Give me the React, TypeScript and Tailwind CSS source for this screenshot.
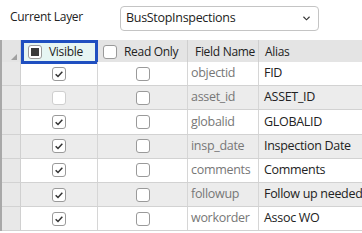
import React from "react";

const ROWS = [
    { field: "objectid", alias: "FID", visible: true },
    { field: "asset_id", alias: "ASSET_ID", visible: false, disabled: true },
    { field: "globalid", alias: "GLOBALID", visible: true },
    { field: "insp_date", alias: "Inspection Date", visible: true },
    { field: "comments", alias: "Comments", visible: true },
    { field: "followup", alias: "Follow up needed", visible: true },
    { field: "workorder", alias: "Assoc WO", visible: true },
];

function Box({ checked, disabled, mixed }: { checked?: boolean; disabled?: boolean; mixed?: boolean }) {
    return (
        <span className={`w-[14px] h-[14px] rounded-[3px] border bg-white flex items-center justify-center shrink-0 ${disabled ? "border-[#cfcfcf]" : "border-[#9a9a9a]"}`}>
            {checked && (
                <svg viewBox="0 0 12 12" className="w-[10px] h-[10px]">
                    <path d="M2 6.2 L4.8 9 L10 3.2" fill="none" stroke="#333" strokeWidth="1.8" />
                </svg>
            )}
            {mixed && <span className="w-[8px] h-[8px] bg-[#3a3a3a]" />}
        </span>
    );
}

export default function App() {
    return (
        <div className="w-[362px] h-[233px] bg-white overflow-hidden text-[#222] tracking-[-0.3px] whitespace-nowrap" style={{ fontFamily: '"Open Sans", "Noto Sans", sans-serif' }}>
            {/* Layer picker */}
            <div className="flex items-center h-[40px] pb-[6px]">
                <span className="ml-[10px] w-[110px] text-[12px]">Current Layer</span>
                <div className="w-[199px] h-[25px] mt-[2px] border border-[#c4c4c4] rounded-[4px] flex items-center pl-[5px] pr-[8px]">
                    <span className="flex-1 text-[12.5px]">BusStopInspections</span>
                    <svg viewBox="0 0 8 5" className="w-[7px] h-[5px]">
                        <path d="M0.5 0.5 L4 4 L7.5 0.5" fill="none" stroke="#333" strokeWidth="1.3" />
                    </svg>
                </div>
            </div>

            {/* Grid */}
            <div className="border-l-2 border-[#a8a8a8] text-[12px]">
                <div className="grid grid-cols-[19px_77px_90px_71px_1fr] h-[22px] bg-[#e4e4e4]">
                    <div className="border-r border-[#d0d0d0] relative">
                        <svg viewBox="0 0 6 6" className="absolute right-[3px] bottom-[4px] w-[6px] h-[6px]">
                            <path d="M6 0 L6 6 L0 6 Z" fill="#a0a0a0" />
                        </svg>
                    </div>
                    <div className="border-[3px] border-[#1f4fc0] bg-[#e6f5f3] flex items-center pl-[4px] gap-[7px]">
                        <Box mixed />
                        <span>Visible</span>
                    </div>
                    <div className="border-r border-[#cfcfcf] flex items-center pl-[5px] gap-[7px]">
                        <Box />
                        <span>Read Only</span>
                    </div>
                    <div className="border-r border-[#cfcfcf] flex items-center pl-[7px] overflow-hidden">Field Name</div>
                    <div className="flex items-center pl-[6px]">Alias</div>
                </div>
                {ROWS.map((r, i) => (
                    <div key={r.field} className={`grid grid-cols-[19px_77px_90px_71px_1fr] h-[24.2px] border-b border-[#d2d2d2] ${i % 2 ? "bg-[#ececec]" : "bg-white"}`}>
                        <div className="bg-[#e8e8e8] border-r border-[#d0d0d0]" />
                        <div className="border-r border-[#d6d6d6] flex items-center justify-center">
                            <Box checked={r.visible} disabled={r.disabled} />
                        </div>
                        <div className="border-r border-[#d6d6d6] flex items-center justify-center">
                            <Box />
                        </div>
                        <div className="border-r border-[#d6d6d6] flex items-center pl-[3px] text-[#777] text-[12.5px] overflow-hidden">{r.field}</div>
                        <div className="flex items-center pl-[5px] text-[12.5px] overflow-hidden">{r.alias}</div>
                    </div>
                ))}
            </div>
        </div>
    );
}
